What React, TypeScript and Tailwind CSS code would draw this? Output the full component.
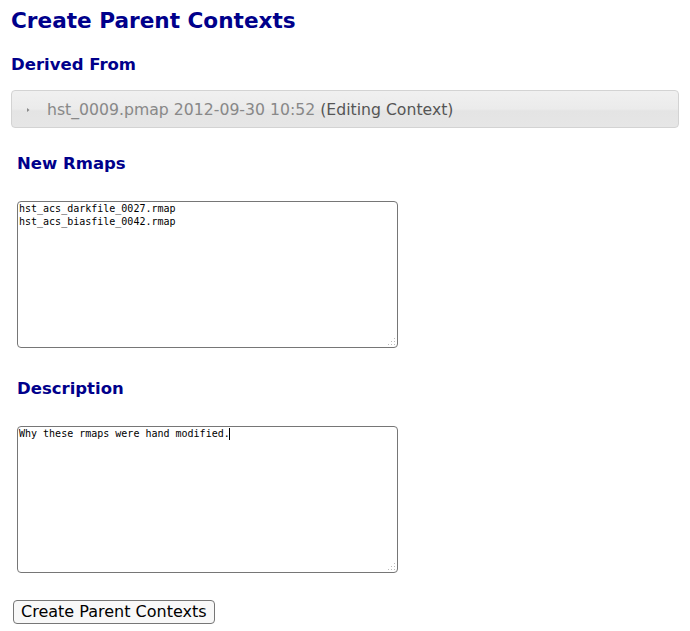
import { useEffect, useRef } from "react";

function Grip() {
  return (
    <svg width="9" height="9" viewBox="0 0 9 9" className="pointer-events-none absolute bottom-[2px] right-[2px]">
      <g fill="#bbb">
        <rect x="7" y="1" width="1" height="1" />
        <rect x="4" y="4" width="1" height="1" />
        <rect x="7" y="4" width="1" height="1" />
        <rect x="1" y="7" width="1" height="1" />
        <rect x="4" y="7" width="1" height="1" />
        <rect x="7" y="7" width="1" height="1" />
      </g>
    </svg>
  );
}

export default function App() {
  const descRef = useRef<HTMLTextAreaElement>(null);

  useEffect(() => {
    const el = descRef.current;
    if (el) {
      el.focus();
      el.setSelectionRange(el.value.length, el.value.length);
    }
  }, []);

  const areaCls =
    "block h-[147px] w-[381px] resize-none rounded-[4px] border border-[#767676] px-[1px] py-0 font-['DejaVu_Sans_Mono',monospace] text-[10px] leading-[13px] text-black caret-transparent outline-none";

  return (
    <div className="min-h-screen bg-white px-[11px] pt-[8px] font-['DejaVu_Sans',sans-serif]">
      <h1 className="text-[21.6px] font-bold leading-[26px] text-[#00008b]">Create Parent Contexts</h1>
      <h3 className="mt-[21px] text-[16.5px] font-bold leading-[20px] text-[#00008b]">Derived From</h3>

      <div className="mt-[15px] flex h-[38px] items-center rounded-[4px] border border-[#d3d3d3] bg-[linear-gradient(to_bottom,#f0f0f0_0%,#ebebeb_50%,#e4e4e4_55%,#e6e6e6_100%)] pl-[13px] pt-[2px]">
        <svg width="6" height="8" viewBox="0 0 6 8" className="mr-[16px]">
          <path d="M2 2 L4.5 4 L2 6 Z" fill="#888" />
        </svg>
        <span className="text-[15.7px] text-[#888]">
          hst_0009.pmap 2012-09-30 10:52 <span className="text-[#555]">(Editing Context)</span>
        </span>
      </div>

      <div className="px-[6px]">
        <h3 className="mt-[26px] text-[16.5px] font-bold leading-[20px] text-[#00008b]">New Rmaps</h3>
        <div className="relative mt-[27px] w-[381px]">
          <textarea
            className={areaCls}
            defaultValue={"hst_acs_darkfile_0027.rmap\nhst_acs_biasfile_0042.rmap"}
          />
          <Grip />
        </div>

        <h3 className="mt-[31px] text-[16.5px] font-bold leading-[20px] text-[#00008b]">Description</h3>
        <div className="relative mt-[27px] w-[381px]">
          <textarea ref={descRef} className={areaCls} defaultValue="Why these rmaps were hand modified." />
          <span className="pointer-events-none absolute left-[212px] top-[2px] h-[12px] w-[1px] bg-black" />
          <Grip />
        </div>
      </div>

      <button className="mt-[27px] ml-[2px] h-[24px] rounded-[4px] border border-[#767676] bg-[#f8f8f8] px-[7px] text-[16px] leading-[20px] text-black">
        Create Parent Contexts
      </button>
    </div>
  );
}
